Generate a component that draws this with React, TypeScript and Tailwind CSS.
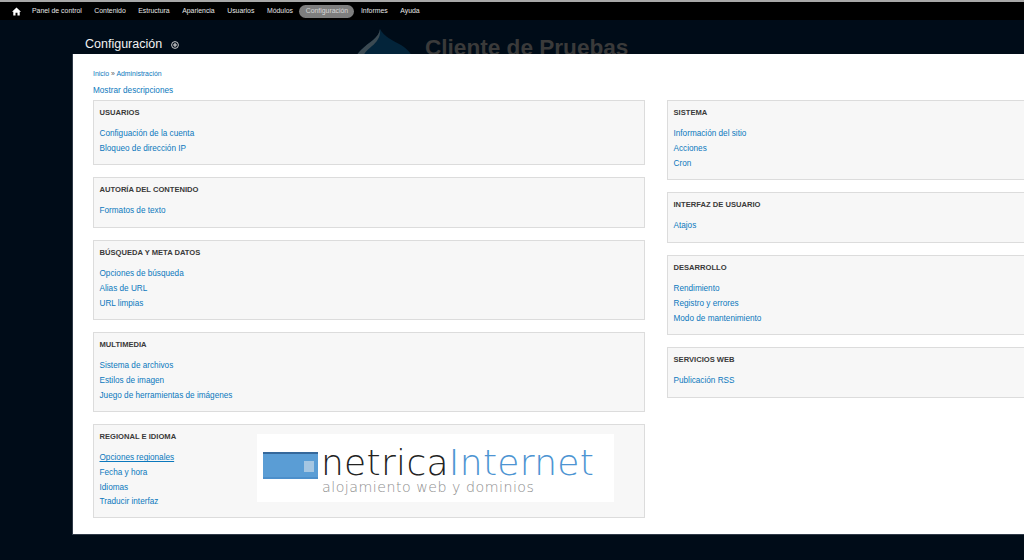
import { Fragment } from 'react'

const navItems = ['Panel de control', 'Contenido', 'Estructura', 'Apariencia', 'Usuarios', 'Módulos', 'Configuración', 'Informes', 'Ayuda']

interface Block {
  title: string
  links: string[]
  height: string
}

const leftBlocks: Block[] = [
  { title: 'USUARIOS', links: ['Configuación de la cuenta', 'Bloqueo de dirección IP'], height: 'h-[65px]' },
  { title: 'AUTORÍA DEL CONTENIDO', links: ['Formatos de texto'], height: 'h-[51px]' },
  { title: 'BÚSQUEDA Y META DATOS', links: ['Opciones de búsqueda', 'Alias de URL', 'URL limpias'], height: 'h-[80px]' },
  { title: 'MULTIMEDIA', links: ['Sistema de archivos', 'Estilos de imagen', 'Juego de herramientas de imágenes'], height: 'h-[80px]' },
  { title: 'REGIONAL E IDIOMA', links: ['Opciones regionales', 'Fecha y hora', 'Idiomas', 'Traducir interfaz'], height: 'h-[94px]' },
]

const rightBlocks: Block[] = [
  { title: 'SISTEMA', links: ['Información del sitio', 'Acciones', 'Cron'], height: 'h-[80px]' },
  { title: 'INTERFAZ DE USUARIO', links: ['Atajos'], height: 'h-[51px]' },
  { title: 'DESARROLLO', links: ['Rendimiento', 'Registro y errores', 'Modo de mantenimiento'], height: 'h-[80px]' },
  { title: 'SERVICIOS WEB', links: ['Publicación RSS'], height: 'h-[51px]' },
]

function AdminBlock({ block }: { block: Block }) {
  return (
    <div className={`${block.height} w-[552px] shrink-0 border border-[#dcdcdc] bg-[#f7f7f7] pl-[5.5px] pt-[7px]`}>
      <h3 className="text-[7.6px] font-bold leading-[10px] text-[#3a3a3a]">{block.title}</h3>
      <ul className="mt-[9.4px]">
        {block.links.map((l) => (
          <li key={l} className="h-[14.7px] text-[8.2px] leading-[14.7px] text-[#0b78bd]">
            <span className={l === 'Opciones regionales' ? 'underline' : ''}>{l}</span>
          </li>
        ))}
      </ul>
    </div>
  )
}

function NetricaLogo() {
  return (
    <div className="absolute left-[164px] top-[10px] flex h-[68px] w-[357px] items-start bg-white pl-[6px] pt-[18px]">
      <div className="mr-[3px] h-[27px] w-[55px] shrink-0 border-t-2 border-b-2 border-t-[#35689b] border-b-[#4c8fcb] bg-[#5a9dd5] pl-[41px] pt-[7px]">
        <div className="h-[11px] w-[10px] bg-[#a5c6e2]" />
      </div>
      <div className="-mt-[8px] font-['DejaVu_Sans',sans-serif]">
        <div className="whitespace-nowrap text-[36px] font-extralight leading-[38px] tracking-[0.3px] text-[#222]">
          netrica<span className="text-[#4d94d2]">Internet</span>
        </div>
        <div className="ml-[1px] whitespace-nowrap text-[14.2px] font-extralight leading-[10px] tracking-[0.5px] text-[#8e8e8e]">
          alojamiento web y dominios
        </div>
      </div>
    </div>
  )
}

export default function App() {
  return (
    <div className="flex h-[560px] w-[1024px] flex-col overflow-hidden bg-[#000c18] font-['Liberation_Sans',Arial,sans-serif]">
      <div className="h-[2px] shrink-0 bg-[#a8a8a8]" />
      <nav className="flex h-[18px] shrink-0 items-center bg-black pl-[12px] text-[6.9px] text-[#e6e6e6]">
        <svg width="9" height="9" viewBox="0 0 12 12" className="mr-[11px]">
          <path d="M6 .8 0 6.4h1.7V11.4h3V7.6h2.6v3.8h3V6.4H12L6 .8Z" fill="#fff" />
        </svg>
        <div className="flex items-center">
          {navItems.map((item) => (
            <Fragment key={item}>
              {item === 'Configuración' ? (
                <span className="-mx-[6px] flex h-[13px] w-[55px] items-center justify-center rounded-full bg-[#7e7e7e] text-[#d8d8d8]">{item}</span>
              ) : (
                <span className="whitespace-nowrap">{item}</span>
              )}
              <span className="w-[12.5px]" />
            </Fragment>
          ))}
        </div>
      </nav>
      <header className="relative flex h-[34px] shrink-0 overflow-hidden bg-[#000c18] pl-[85px]">
        <div className="flex h-[34px] items-center pt-[13px]">
          <h1 className="text-[12.5px] leading-[16px] text-[#f2f2f2]">Configuración</h1>
          <svg width="8" height="8" viewBox="0 0 8 8" className="ml-[9px] mt-[2px]">
            <circle cx="4" cy="4" r="3.4" fill="none" stroke="#ddd" strokeWidth="0.9" />
            <path d="M4 2v4M2 4h4" stroke="#ddd" strokeWidth="1.1" />
          </svg>
        </div>
        <svg width="62" height="36" viewBox="0 0 62 36" className="absolute left-[353px] top-[9px]">
          <path d="M27 0C26 9 16 13 8 21 4 25 1 29 1 36h60c0-9-5-15-13-20C41 12 31 8 27 0Z" fill="#03243a" />
          <path d="M27 0C26 9 16 13 8 21 4 25 1 29 1 36h7c0-9 5-14 11-19 5-4 9-10 8-17Z" fill="#3b4a52" />
        </svg>
        <div className="absolute left-[425px] top-[15px] whitespace-nowrap text-[22.6px] font-bold leading-[26px] text-[#3a3a3a]">Cliente de Pruebas</div>
      </header>
      <main className="ml-[72px] h-[481px] w-[1200px] shrink-0 border-b border-l border-[#2f3a48] bg-white pl-[20px] pt-[15px]">
        <div className="text-[6.9px] leading-[10px] text-[#0b78bd]">
          Inicio <span className="text-[#555]">»</span> Administración
        </div>
        <div className="mt-[6px] text-[8.2px] leading-[12px] text-[#0b78bd]">Mostrar descripciones</div>
        <div className="mt-[3px] flex items-start gap-[22px]">
          <div className="flex w-[552px] shrink-0 flex-col gap-[12px]">
            {leftBlocks.map((b) => (
              <div key={b.title} className="relative">
                <AdminBlock block={b} />
                {b.title === 'REGIONAL E IDIOMA' && <NetricaLogo />}
              </div>
            ))}
          </div>
          <div className="flex w-[552px] shrink-0 flex-col gap-[12px]">
            {rightBlocks.map((b) => (
              <AdminBlock key={b.title} block={b} />
            ))}
          </div>
        </div>
      </main>
    </div>
  )
}
